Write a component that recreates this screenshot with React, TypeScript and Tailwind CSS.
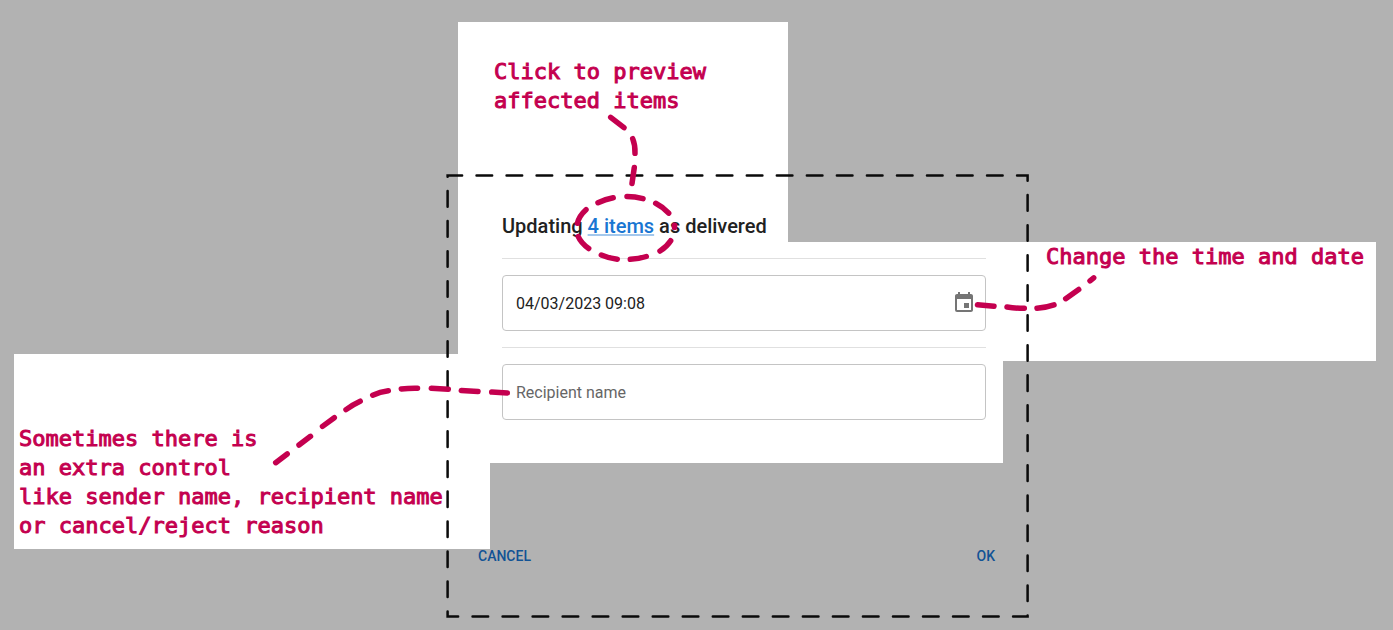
import type { ReactNode } from "react";
import { MdEvent } from "react-icons/md";

const strokes = [
  // pointer to the item count
  "M610.7 117.3L624 127.7",
  "M632.7 138.7Q635.3 145 635 153.3",
  "M634.3 167.5L632 183.5",
  // ring around the item count
  "M598 202.7Q605 199.3 613.2 197.8",
  "M627 196.6Q635 196.6 643 198.7",
  "M655.7 203.3Q663 207 668.7 213.2",
  "M674.5 225.3V227.5",
  "M670.7 240.7Q667 246.5 660 251",
  "M646.3 256.5Q639 258.8 630.3 259.3",
  "M617.3 259.2Q609 258.3 601.3 255",
  "M588.7 248.5Q581 243 578.2 236.5",
  "M577.4 223.3Q579 216 586 209.7",
  // pointer to the calendar button
  "M977.5 304.7L994 306.2",
  "M1007 307Q1015 308.3 1024.3 308.3",
  "M1037 308.3Q1046 307.5 1054 304.8",
  "M1065.7 298.7L1078.7 289.5",
  "M1090 280.8L1093.7 277.8",
  // pointer to the recipient field
  "M275.7 462.7L287.2 454",
  "M299 445L310.5 436.3",
  "M322.5 426.4L334.3 417.7",
  "M346 409.6Q353 404.5 360.2 401.2",
  "M372.7 395.2Q380 391.8 388.3 390.7",
  "M401.3 389Q409 388 417.5 388.2",
  "M431.3 388.2L448.3 389.3",
  "M461.3 390.4L478 391.5",
  "M491.7 392.1L507.3 393",
];

function Spotlight({ className, children }: { className: string; children?: ReactNode }) {
  return (
    <div
      className={`absolute bg-white font-['DejaVu_Sans_Mono',monospace] text-[22px] leading-[29px] whitespace-nowrap text-[#c4004f] [-webkit-text-stroke:1px_#c4004f] ${className}`}
    >
      {children}
    </div>
  );
}

function Divider() {
  return <hr className="border-t border-[#e0e0e0]" />;
}

export default function App() {
  return (
    <main className="flex min-h-screen items-start justify-center overflow-hidden bg-[#b2b2b2] pt-44 pl-[82px] font-[Roboto,sans-serif]">
      <section aria-labelledby="dialog-title" className="relative w-[581px] shrink-0">
        <Spotlight className="-top-[154px] left-[11px] h-[220px] w-[330px] pt-[35px] pl-9">
          <p>
            Click to preview
            <br />
            affected items
          </p>
        </Spotlight>
        <Spotlight className="top-[66px] left-[11px] flex h-[119px] w-[918px] justify-end pr-3">
          <p>Change the time and date</p>
        </Spotlight>
        <Spotlight className="top-[185px] left-[11px] h-[102px] w-[545px]" />
        <Spotlight className="top-[178px] -left-[433px] h-[195px] w-[476px] pt-[70px] pl-[5px]">
          <p>
            Sometimes there is
            <br />
            an extra control
            <br />
            like sender name, recipient name
            <br />
            or cancel/reject reason
          </p>
        </Spotlight>

        <form className="relative" onSubmit={(e) => e.preventDefault()}>
          <div className="flex flex-col gap-4 pt-[34px] pr-[42px] pl-[55px]">
            <h2 id="dialog-title" className="text-xl leading-8 font-medium text-[#212121]">
              Updating{" "}
              <a
                href="#items"
                className="text-[#1976d2] underline decoration-[#1976d2]/40 decoration-2 underline-offset-1"
              >
                4 items
              </a>{" "}
              as delivered
            </h2>
            <Divider />
            <div className="flex h-14 items-center rounded border border-[#c4c4c4] pr-[9px] pl-[13px]">
              <input
                aria-label="Date and time"
                defaultValue="04/03/2023 09:08"
                className="h-full min-w-0 flex-1 bg-transparent text-base text-[#212121] outline-none"
              />
              <button type="button" aria-label="Choose date" className="text-[#757575]">
                <MdEvent size={24} />
              </button>
            </div>
            <Divider />
            <input
              aria-label="Recipient name"
              placeholder="Recipient name"
              className="h-14 w-full rounded border border-[#c4c4c4] bg-transparent px-[13px] text-base text-[#212121] outline-none placeholder:text-[#666666]"
            />
          </div>
          <div className="flex justify-between pt-[118px] pr-[25px] pb-[43px] pl-[23px] text-sm font-medium text-[#125395]">
            <button type="button" className="h-9 px-2">
              CANCEL
            </button>
            <button type="submit" className="h-9 px-2">
              OK
            </button>
          </div>
        </form>

        <svg
          aria-hidden="true"
          className="pointer-events-none absolute -top-44 -left-[447px] h-[630px] w-[1393px] max-w-none"
          viewBox="0 0 1393 630"
          fill="none"
          strokeLinecap="round"
        >
          <path
            d="M447.6 175.6H1027.6V616.6H447.6Z"
            stroke="#0a0a0a"
            strokeWidth="2.5"
            strokeDasharray="15.6 14.43"
            strokeDashoffset="1.1"
          />
          {strokes.map((d) => (
            <path key={d} d={d} stroke="#c4004f" strokeWidth="5.5" />
          ))}
        </svg>
      </section>
    </main>
  );
}
